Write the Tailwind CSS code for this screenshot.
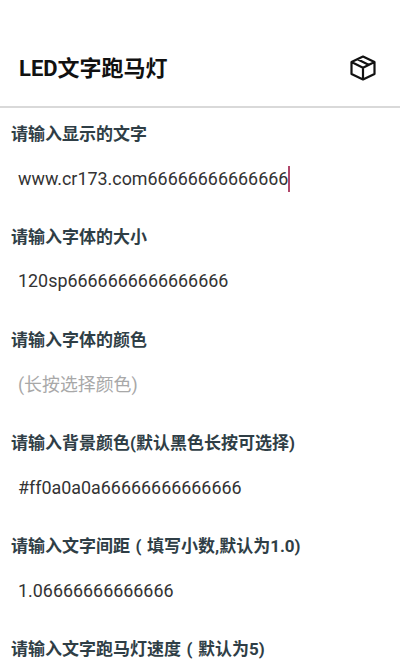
<!DOCTYPE html>
<html><head><meta charset="utf-8"><script src="https://cdn.jsdelivr.net/npm/@tailwindcss/browser@4"></script></head>
<body class="bg-white overflow-hidden">
<div class="w-[400px] h-[661px] overflow-hidden font-['Roboto','Noto_Sans_CJK_SC',sans-serif]">
<header class="h-[108px] pt-[30px] border-b-2 border-[#d9d9d9] flex items-center justify-between pl-[19px] pr-[24px]">
<h1 class="text-[22px] font-bold text-[#111]">LED文字跑马灯</h1>
<svg class="w-[26px] h-[26px]" viewBox="0 0 26 26" fill="none" stroke="#111" stroke-width="2.2" stroke-linejoin="round"><path d="M13 1.5 L24.5 7 V19 L13 24.5 L1.5 19 V7 Z M1.5 7 L13 12.8 L24.5 7 M13 12.8 V24.5 M7.5 4.2 L19 10"/></svg>
</header>
<main class="pl-[11px]">
<section class="h-[103px] pt-[15px]"><h2 class="text-[17px] leading-[22px] font-bold text-[#2f3e46]">请输入显示的文字</h2><div class="mt-[21px] pl-[7px] text-[17.9px] leading-[24px] text-[#333] flex items-center">www.cr173.com66666666666666<span class="inline-block w-[2px] h-[26px] bg-[#b0476a]"></span></div></section>
<section class="h-[103px] pt-[15px]"><h2 class="text-[17px] leading-[22px] font-bold text-[#2f3e46]">请输入字体的大小</h2><div class="mt-[21px] pl-[7px] text-[17.9px] leading-[24px] text-[#333]">120sp6666666666666666</div></section>
<section class="h-[103px] pt-[15px]"><h2 class="text-[17px] leading-[22px] font-bold text-[#2f3e46]">请输入字体的颜色</h2><div class="mt-[22px] pl-[7px] text-[17.9px] leading-[24px] text-[#a8a8a8]">(长按选择颜色)</div></section>
<section class="h-[103px] pt-[15px]"><h2 class="text-[17px] leading-[22px] font-bold text-[#2f3e46]">请输入背景颜色(默认黑色长按可选择)</h2><div class="mt-[22px] pl-[7px] text-[17.9px] leading-[24px] text-[#333]">#ff0a0a0a66666666666666</div></section>
<section class="h-[103px] pt-[15px]"><h2 class="text-[17px] leading-[22px] font-bold text-[#2f3e46]">请输入文字间距<span class="inline-block w-[17px] text-center">(</span>填写小数,默认为1.0)</h2><div class="mt-[22px] pl-[7px] text-[17.9px] leading-[24px] text-[#333]">1.06666666666666</div></section>
<section class="pt-[15px]"><h2 class="text-[17px] leading-[22px] font-bold text-[#2f3e46]">请输入文字跑马灯速度<span class="inline-block w-[17px] text-center">(</span>默认为5)</h2></section>
</main>
</div>
</body></html>
